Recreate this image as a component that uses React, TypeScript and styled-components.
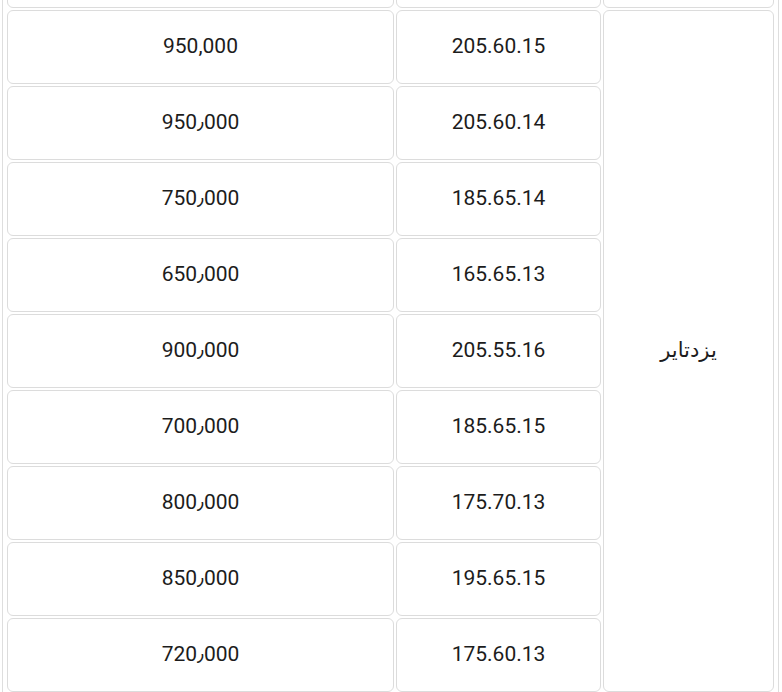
// react
import {
    memo,
} from 'react';
// styled-components
import styled, { createGlobalStyle } from 'styled-components';

const GlobalStyle = createGlobalStyle`
    html, body {
        margin: 0;
        padding: 0;
        background: #ffffff;
    }

    body {
        font-family: Roboto, "DejaVu Sans", sans-serif;
        color: #1c1c1c;
    }
`;

const StyledViewport = styled.div`
    padding-left: 2px;
    height: 692px;

    overflow: hidden;
`;

const StyledTable = styled.table`
    margin-top: -69px;
    padding: 0 2px;

    width: 777px;

    border: 1px solid #dedede;
    border-collapse: separate;
    border-spacing: 2px;
    table-layout: fixed;
`;

const StyledCell = styled.td<{ $width?: number }>`
    ${({ $width }) => ($width ? `width: ${$width}px;` : '')}
    height: 70px;
    padding: 0 0 2px;

    border: 1px solid #dcdcdc;
    border-radius: 6px;

    text-align: center;
    vertical-align: middle;
    font-size: 21px;
    line-height: 24px;
`;

const StyledNumber = styled.span`
    direction: ltr;
    unicode-bidi: isolate;
`;

const StyledBrand = styled.span`
    font-family: "DejaVu Sans", sans-serif;
    font-size: 21px;
`;

type TTireRow = {
    size: string;
    price: string;
};

const tireRowList: TTireRow[] = [
    { size: '205.60.15', price: '950,000' },
    { size: '205.60.14', price: '950٫000' },
    { size: '185.65.14', price: '750٫000' },
    { size: '165.65.13', price: '650٫000' },
    { size: '205.55.16', price: '900٫000' },
    { size: '185.65.15', price: '700٫000' },
    { size: '175.70.13', price: '800٫000' },
    { size: '195.65.15', price: '850٫000' },
    { size: '175.60.13', price: '720٫000' },
];

function App() {
    return (
        <>
            <GlobalStyle />
            <StyledViewport>
                <StyledTable dir="rtl">
                    <tbody>
                        <tr>
                            <StyledCell $width={169}>&nbsp;</StyledCell>
                            <StyledCell $width={203}>&nbsp;</StyledCell>
                            <StyledCell>&nbsp;</StyledCell>
                        </tr>
                        {tireRowList.map((tireRow, index) => (
                            <tr key={tireRow.size}>
                                {index === 0 && (
                                    <StyledCell rowSpan={tireRowList.length}>
                                        <StyledBrand>یزدتایر</StyledBrand>
                                    </StyledCell>
                                )}
                                <StyledCell>
                                    <StyledNumber>{tireRow.size}</StyledNumber>
                                </StyledCell>
                                <StyledCell>
                                    <StyledNumber>{tireRow.price}</StyledNumber>
                                </StyledCell>
                            </tr>
                        ))}
                    </tbody>
                </StyledTable>
            </StyledViewport>
        </>
    );
}

export default memo(App);
